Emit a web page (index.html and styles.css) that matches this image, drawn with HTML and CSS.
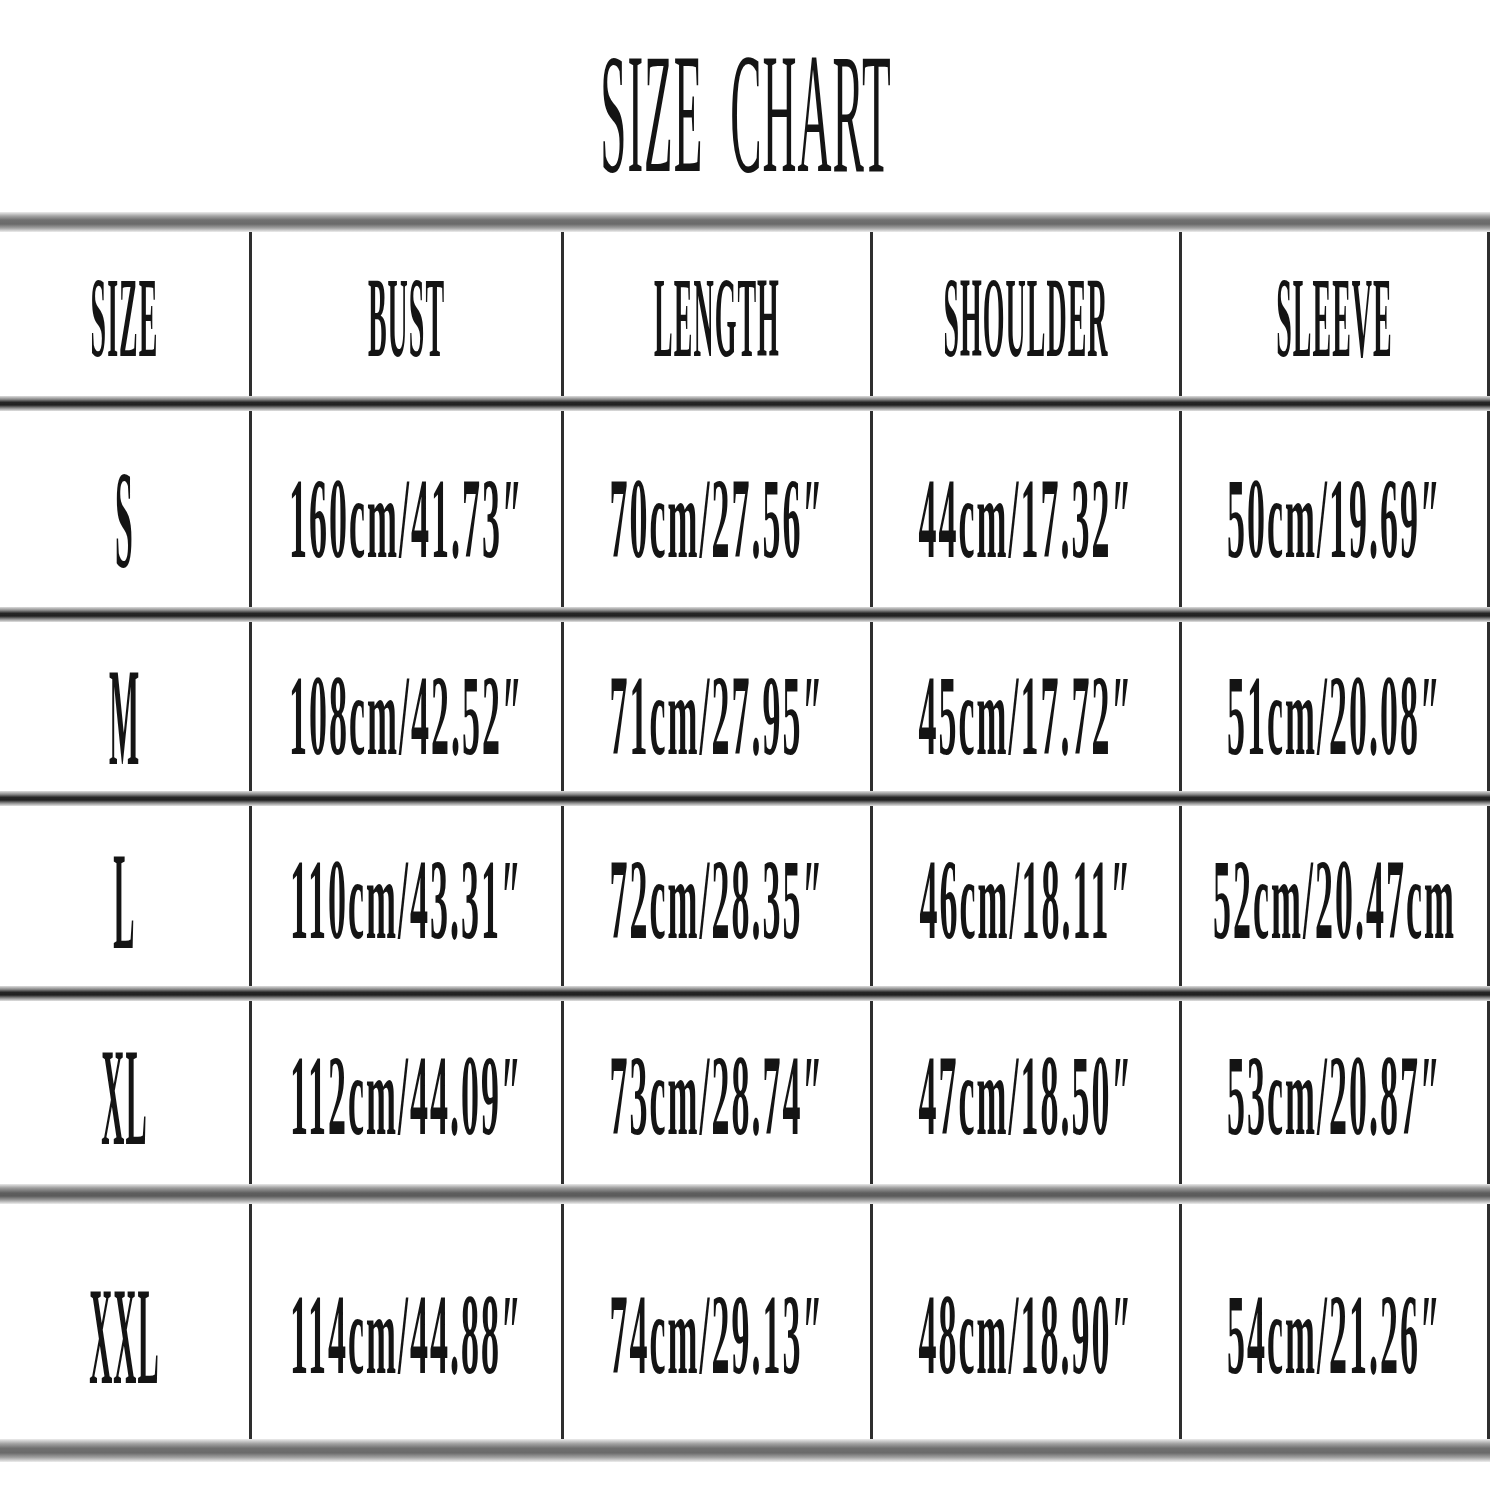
FILE: index.html
```html
<!DOCTYPE html>
<html lang="en">
<head>
<meta charset="utf-8">
<title>Size Chart</title>
<link rel="stylesheet" href="styles.css">
</head>
<body>
<div class="page">
  <h1 class="title"><span class="tx">SIZE CHART</span></h1>
  <div class="chart">
    <div class="rule soft"></div>
    <div class="row head">
      <div class="cell"><span class="tx">SIZE</span></div>
      <div class="cell"><span class="tx">BUST</span></div>
      <div class="cell"><span class="tx">LENGTH</span></div>
      <div class="cell"><span class="tx">SHOULDER</span></div>
      <div class="cell last"><span class="tx">SLEEVE</span></div>
    </div>
    <div class="rule dark"></div>
    <div class="row r-s">
      <div class="cell"><span class="tx size">S</span></div>
      <div class="cell"><span class="tx val">160cm/41.73″</span></div>
      <div class="cell"><span class="tx val">70cm/27.56″</span></div>
      <div class="cell"><span class="tx val">44cm/17.32″</span></div>
      <div class="cell last"><span class="tx val">50cm/19.69″</span></div>
    </div>
    <div class="rule dark"></div>
    <div class="row r-m">
      <div class="cell"><span class="tx size">M</span></div>
      <div class="cell"><span class="tx val">108cm/42.52″</span></div>
      <div class="cell"><span class="tx val">71cm/27.95″</span></div>
      <div class="cell"><span class="tx val">45cm/17.72″</span></div>
      <div class="cell last"><span class="tx val">51cm/20.08″</span></div>
    </div>
    <div class="rule dark"></div>
    <div class="row r-l">
      <div class="cell"><span class="tx size">L</span></div>
      <div class="cell"><span class="tx val">110cm/43.31″</span></div>
      <div class="cell"><span class="tx val">72cm/28.35″</span></div>
      <div class="cell"><span class="tx val">46cm/18.11″</span></div>
      <div class="cell last"><span class="tx val">52cm/20.47cm</span></div>
    </div>
    <div class="rule dark"></div>
    <div class="row r-xl">
      <div class="cell"><span class="tx size">XL</span></div>
      <div class="cell"><span class="tx val">112cm/44.09″</span></div>
      <div class="cell"><span class="tx val">73cm/28.74″</span></div>
      <div class="cell"><span class="tx val">47cm/18.50″</span></div>
      <div class="cell last"><span class="tx val">53cm/20.87″</span></div>
    </div>
    <div class="rule soft mid"></div>
    <div class="row r-xxl">
      <div class="cell"><span class="tx size">XXL</span></div>
      <div class="cell"><span class="tx val">114cm/44.88″</span></div>
      <div class="cell"><span class="tx val">74cm/29.13″</span></div>
      <div class="cell"><span class="tx val">48cm/18.90″</span></div>
      <div class="cell last"><span class="tx val">54cm/21.26″</span></div>
    </div>
    <div class="rule soft bottom"></div>
  </div>
</div>
</body>
</html>
```

FILE: styles.css
```css
html, body {
  margin: 0;
  padding: 0;
  background: #ffffff;
}

.page {
  width: 1500px;
  height: 1500px;
  font-family: "Liberation Serif", "DejaVu Serif", serif;
  color: #141414;
}

.tx {
  display: inline-block;
  line-height: 1;
  white-space: nowrap;
  transform-origin: 50% 50%;
}

.title {
  margin: 0;
  height: 196px;
  padding-top: 16px;
  display: flex;
  align-items: center;
  justify-content: center;
  font-weight: normal;
  font-size: 47px;
}

.title .tx {
  transform: translateX(-4px) scaleY(3.65);
  letter-spacing: 1px;
  word-spacing: 14px;
}

.chart {
  width: 1490px;
  display: flex;
  flex-direction: column;
}

.rule {
  width: 1490px;
}

.rule.soft {
  height: 20px;
  background: linear-gradient(to bottom, #ececec 0%, #a4a4a4 20%, #707070 40%, #6a6a6a 60%, #a0a0a0 80%, #ededed 100%);
}

.rule.soft.mid {
  height: 20px;
  background: linear-gradient(to bottom, #e8e8e8 0%, #9c9c9c 20%, #5e5e5e 45%, #5a5a5a 60%, #9a9a9a 80%, #ededed 100%);
}

.rule.soft.bottom {
  height: 23px;
}

.rule.dark {
  height: 15px;
  background: linear-gradient(to bottom, #dcdcdc 0%, #8a8a8a 22%, #262626 42%, #202020 60%, #8a8a8a 80%, #e2e2e2 100%);
}

.row {
  display: grid;
  grid-template-columns: 249px 312px 309px 309px 311px;
}

.cell {
  box-sizing: border-box;
  display: flex;
  align-items: center;
  justify-content: center;
  border-left: 3px solid #2e2e2e;
}

.cell:first-child {
  border-left: none;
}

.cell.last {
  border-right: 3px solid #2e2e2e;
}

.head {
  height: 164px;
  font-weight: bold;
  font-size: 28px;
}

.head .cell {
  padding-top: 12px;
}

.head .tx {
  transform: scaleY(4.05);
  letter-spacing: 1px;
}

.row .val {
  font-weight: bold;
  font-size: 36px;
  letter-spacing: 2px;
  transform: scaleY(3.15);
}

.row .size {
  font-weight: bold;
  font-size: 32px;
  letter-spacing: 1px;
  transform: scaleY(4.4);
}

.r-s { height: 196px; }
.r-s .cell { padding-top: 20px; }

.r-m { height: 169px; }
.r-m .cell { padding-top: 18px; }

.r-l { height: 180px; }
.r-l .cell { padding-top: 8px; }

.r-xl { height: 183px; }
.r-xl .cell { padding-top: 6px; }

.r-xxl { height: 235px; }
.r-xxl .cell { padding-top: 26px; }
```
